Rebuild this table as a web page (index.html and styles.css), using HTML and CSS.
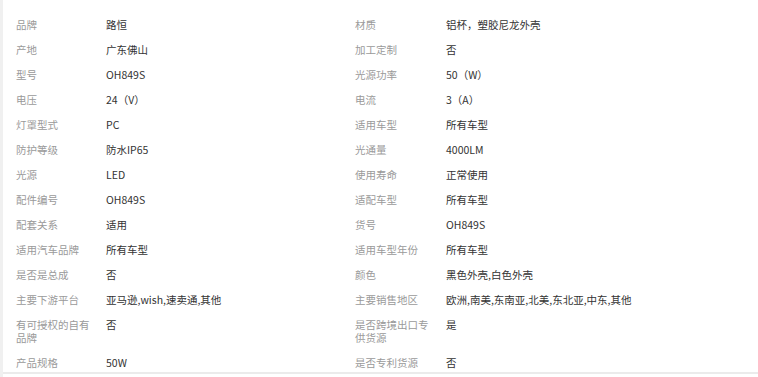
FILE: index.html
```html
<!DOCTYPE html>
<html lang="zh-CN">
<head>
<meta charset="utf-8">
<title>产品属性</title>
<link rel="stylesheet" href="styles.css">
</head>
<body>
<div class="page">
  <div class="panel">
    <div class="attrs">
      <div class="k">品牌</div><div class="v">路恒</div><div class="k">材质</div><div class="v">铝杯，塑胶尼龙外壳</div>
      <div class="k">产地</div><div class="v">广东佛山</div><div class="k">加工定制</div><div class="v">否</div>
      <div class="k">型号</div><div class="v">OH849S</div><div class="k">光源功率</div><div class="v">50（W）</div>
      <div class="k">电压</div><div class="v">24（V）</div><div class="k">电流</div><div class="v">3（A）</div>
      <div class="k">灯罩型式</div><div class="v">PC</div><div class="k">适用车型</div><div class="v">所有车型</div>
      <div class="k">防护等级</div><div class="v">防水IP65</div><div class="k">光通量</div><div class="v">4000LM</div>
      <div class="k">光源</div><div class="v">LED</div><div class="k">使用寿命</div><div class="v">正常使用</div>
      <div class="k">配件编号</div><div class="v">OH849S</div><div class="k">适配车型</div><div class="v">所有车型</div>
      <div class="k">配套关系</div><div class="v">适用</div><div class="k">货号</div><div class="v">OH849S</div>
      <div class="k">适用汽车品牌</div><div class="v">所有车型</div><div class="k">适用车型年份</div><div class="v">所有车型</div>
      <div class="k">是否是总成</div><div class="v">否</div><div class="k">颜色</div><div class="v">黑色外壳,白色外壳</div>
      <div class="k">主要下游平台</div><div class="v">亚马逊,wish,速卖通,其他</div><div class="k">主要销售地区</div><div class="v">欧洲,南美,东南亚,北美,东北亚,中东,其他</div>
      <div class="k">有可授权的自有品牌</div><div class="v">否</div><div class="k">是否跨境出口专供货源</div><div class="v">是</div>
      <div class="k">产品规格</div><div class="v">50W</div><div class="k">是否专利货源</div><div class="v">否</div>
    </div>
  </div>
</div>
</body>
</html>
```
FILE: styles.css
```css
html, body {
  margin: 0;
  padding: 0;
  background: #ffffff;
}

.page {
  height: 377px;
  border-left: 3px solid #f0f0f0;
  box-sizing: border-box;
  font-family: "Noto Sans CJK SC", "Liberation Sans", sans-serif;
  font-size: 10.5px;
}

.panel {
  height: 374px;
  box-sizing: border-box;
  border-bottom: 2px solid #ebebeb;
  overflow: hidden;
  padding: 12px 0 0 13px;
}

.attrs {
  display: grid;
  grid-template-columns: 90px 249px 91px 1fr;
}

.k,
.v {
  padding: 6px 0;
  line-height: 13px;
}

.k {
  color: #9a9a9a;
  padding-right: 10px;
}

.v {
  color: #333333;
}
```
